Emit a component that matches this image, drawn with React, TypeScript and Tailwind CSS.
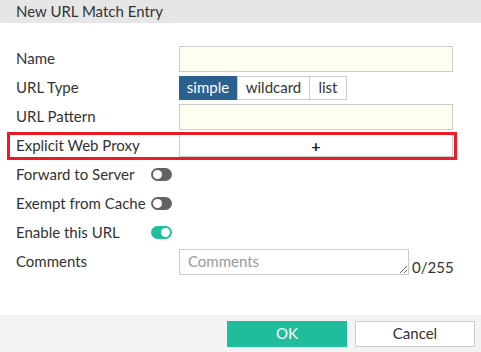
import React from "react";

const Toggle: React.FC<{ on?: boolean }> = ({ on }) => (
  <div
    className={`w-[21px] h-[13px] rounded-full flex items-center px-[2px] ${
      on ? "bg-[#1fbe9c] justify-end" : "bg-[#636363] justify-start"
    }`}
  >
    <div className="w-[9px] h-[9px] rounded-full bg-white" />
  </div>
);

export default function App() {
  return (
    <div
      className="w-[481px] h-[352px] bg-white flex flex-col text-[#333] text-[15px]"
      style={{ fontFamily: "Lato, 'Open Sans', sans-serif" }}
    >
      <div className="h-[23px] bg-[#e6e6e6] px-4 flex items-center text-[15px] text-[#333]">
        New URL Match Entry
      </div>

      <div className="flex-1 pt-[21px] flex flex-col">
        {/* Name */}
        <div className="h-[29px] flex items-center pl-4">
          <div className="w-[163px]">Name</div>
          <div className="w-[274px] h-[26px] border border-[#cccccc] bg-[#fffff0]" />
        </div>

        {/* URL Type */}
        <div className="h-[29px] flex items-center pl-4">
          <div className="w-[163px]">URL Type</div>
          <div className="flex h-[24px]">
            <div className="w-[58px] bg-[#2a6191] text-white flex items-center justify-center">
              simple
            </div>
            <div className="w-[73px] border border-[#cccccc] flex items-center justify-center">
              wildcard
            </div>
            <div className="w-[37px] border border-l-0 border-[#cccccc] flex items-center justify-center">
              list
            </div>
          </div>
        </div>

        {/* URL Pattern */}
        <div className="h-[29px] flex items-center pl-4">
          <div className="w-[163px]">URL Pattern</div>
          <div className="w-[274px] h-[26px] border border-[#cccccc] bg-[#fffff0]" />
        </div>

        {/* Explicit Web Proxy */}
        <div className="relative h-[29px] flex items-center pl-4">
          <div className="w-[163px]">Explicit Web Proxy</div>
          <div className="w-[274px] h-[23px] border border-[#cccccc] bg-white flex items-center justify-center font-bold text-[16px] text-[#222]">
            +
          </div>
          <div className="absolute left-[7px] top-[1px] w-[450px] h-[28px] border-[3px] border-[#ec1c24]" />
        </div>

        {/* Toggles */}
        <div className="h-[29px] flex items-center pl-4">
          <div className="w-[135px]">Forward to Server</div>
          <Toggle />
        </div>
        <div className="h-[29px] flex items-center pl-4">
          <div className="w-[135px]">Exempt from Cache</div>
          <Toggle />
        </div>
        <div className="h-[29px] flex items-center pl-4">
          <div className="w-[135px]">Enable this URL</div>
          <Toggle on />
        </div>

        {/* Comments */}
        <div className="h-[29px] flex items-center pl-4">
          <div className="w-[163px]">Comments</div>
          <div className="flex items-end">
            <textarea
              placeholder="Comments"
              className="w-[230px] h-[26px] border border-[#cccccc] px-2 py-[1px] text-[15px] leading-[20px] placeholder:text-[#999] outline-none"
            />
            <span className="ml-[3px] leading-[16px]">0/255</span>
          </div>
        </div>
      </div>

      <div className="h-[37px] bg-[#f3f3f3] flex items-center justify-end gap-2 pr-[6px]">
        <button className="w-[120px] h-[26px] bg-[#20bd9c] text-white text-[15px]">
          OK
        </button>
        <button className="w-[120px] h-[26px] bg-white border border-[#cccccc] text-[#333] text-[15px]">
          Cancel
        </button>
      </div>
    </div>
  );
}
